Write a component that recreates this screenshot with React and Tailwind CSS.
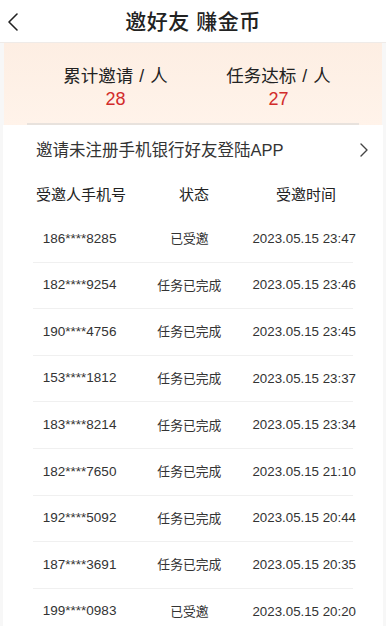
import React from 'react';

const rows = [
  ['186****8285', '已受邀', '2023.05.15 23:47'],
  ['182****9254', '任务已完成', '2023.05.15 23:46'],
  ['190****4756', '任务已完成', '2023.05.15 23:45'],
  ['153****1812', '任务已完成', '2023.05.15 23:37'],
  ['183****8214', '任务已完成', '2023.05.15 23:34'],
  ['182****7650', '任务已完成', '2023.05.15 21:10'],
  ['192****5092', '任务已完成', '2023.05.15 20:44'],
  ['187****3691', '任务已完成', '2023.05.15 20:35'],
  ['199****0983', '已受邀', '2023.05.15 20:20'],
];

const font = { fontFamily: '"Liberation Sans", "Noto Sans CJK SC", sans-serif' };

function Stat({ label, value, className }) {
  return (
    <div className={'flex-1 flex flex-col items-center ' + className}>
      <span className="text-[17.5px] leading-[22px]">
        {label}
        <span className="mx-[6px]">/</span>人
      </span>
      <span className="text-[18px] leading-[24px] text-[#d22b2b]">{value}</span>
    </div>
  );
}

export default function App() {
  return (
    <div className="w-[386px] h-[626px] overflow-hidden bg-[#f7f7f7] text-[#222]" style={font}>
      {/* header */}
      <div className="relative h-[43px] bg-white flex items-center justify-center border-b border-[#efebe8]">
        <svg className="absolute left-[6px] top-[12px]" width="14" height="20" viewBox="0 0 14 20" fill="none">
          <path d="M11 2 L3 10 L11 18" stroke="#222" strokeWidth="1.6" strokeLinecap="round" strokeLinejoin="round" />
        </svg>
        <h1 className="text-[21px] font-medium tracking-[0.5px] pt-[1px]">邀好友 赚金币</h1>
      </div>

      {/* stats */}
      <div className="mx-[4px] h-[82px] bg-gradient-to-b from-[#fdeee3] to-[#fff3ea] flex flex-col">
        <div className="flex-1 flex pt-[22px]">
          <Stat label="累计邀请" value="28" className="pl-[30px]" />
          <Stat label="任务达标" value="27" className="pr-[22px]" />
        </div>
        <div className="mx-[23px] h-[2px] bg-[#e8e2dd]" />
      </div>

      {/* card */}
      <div className="mx-[3px] bg-white h-full">
        <div className="h-[50px] flex items-center justify-between pl-[33px] pr-[14px]">
          <span className="text-[16.5px] text-[#333]">邀请未注册手机银行好友登陆APP</span>
          <svg width="10" height="16" viewBox="0 0 10 16" fill="none">
            <path d="M2 2 L8 8 L2 14" stroke="#444" strokeWidth="1.4" strokeLinecap="round" strokeLinejoin="round" />
          </svg>
        </div>
        <div className="h-[41px] flex items-center mx-[30px] text-[15px] text-[#222]">
          <span className="w-[96px] text-center">受邀人手机号</span>
          <span className="w-[130px] text-center">状态</span>
          <span className="flex-1 text-center">受邀时间</span>
        </div>
        <div className="mx-[30px]">
          {rows.map(([phone, status, time], i) => (
            <div key={i} className="h-[46.6px] flex items-center border-b border-[#f0f0f0] text-[#333]">
              <span className="w-[96px] text-center text-[13.5px]">{phone}</span>
              <span className="w-[130px] text-center text-[12.8px]">{status}</span>
              <span className="flex-1 text-right whitespace-nowrap text-[13.3px] -mr-[3px]">{time}</span>
            </div>
          ))}
        </div>
      </div>
    </div>
  );
}
